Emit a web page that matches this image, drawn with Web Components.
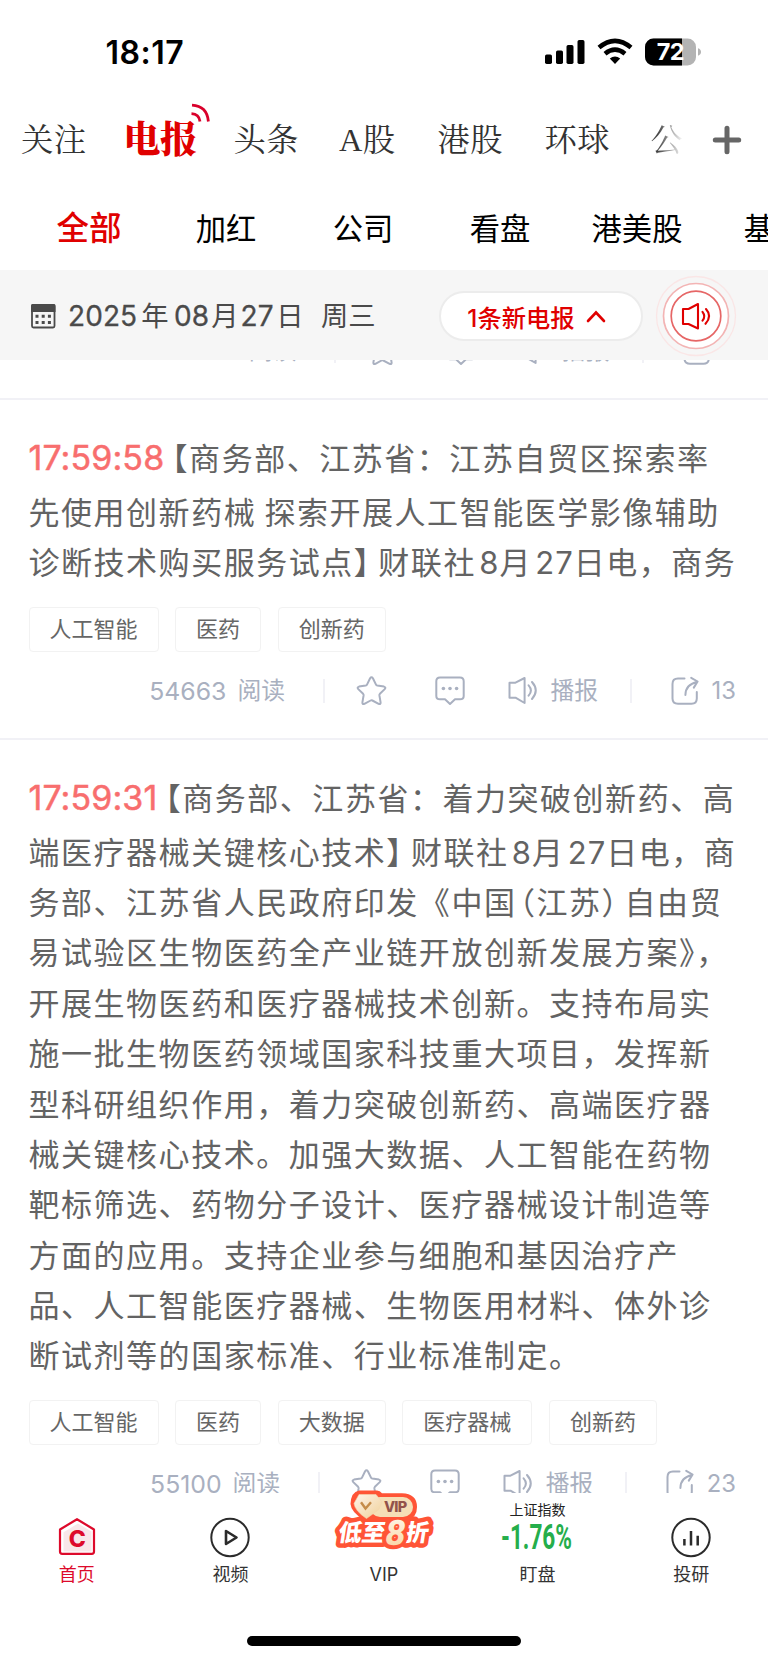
<!DOCTYPE html>
<html lang="zh-CN">
<head>
<meta charset="utf-8">
<meta name="viewport" content="width=device-width, initial-scale=1">
<title>电报</title>
<style>
  html, body { margin: 0; padding: 0; background: #fff; }
  body { font-family: Inter, "Noto Sans CJK SC", sans-serif; width: 768px; height: 1663px; overflow: hidden; }
</style>
</head>
<body>
<telegraph-app></telegraph-app>

<script>
const ICONS = {
  star: `<svg width="31" height="30" viewBox="0 0 31 30"><path d="M14.1 2.2Q15.5.2 16.9 2.2L20 8.6Q20.4 9.4 21.3 9.6L28 10.6Q30.3 11.2 28.7 13.1L23.9 17.8Q23.3 18.5 23.4 19.4L24.6 26.4Q24.8 28.6 22.6 27.8L16.4 24.5Q15.5 24 14.6 24.5L8.4 27.8Q6.2 28.6 6.4 26.4L7.6 19.4Q7.7 18.5 7.1 17.8L2.3 13.1Q.7 11.2 3 10.6L9.7 9.6Q10.6 9.4 11 8.6Z"/></svg>`,
  comment: `<svg width="30" height="30" viewBox="0 0 30 30"><path d="M5 1.5H25Q28.7 1.5 28.7 5.2V20Q28.7 23.3 25 23.3H20L15 28L10 23.3H5Q1.3 23.3 1.3 20V5.2Q1.3 1.5 5 1.5Z"/><g fill="currentColor" stroke="none"><circle cx="8.4" cy="12.5" r="1.8"/><circle cx="15" cy="12.5" r="1.8"/><circle cx="21.6" cy="12.5" r="1.8"/></g></svg>`,
  speaker: `<svg width="30" height="30" viewBox="0 0 30 30"><path d="M1.5 6.7H7.5L16.6 2V27L7.5 21.7H1.5Z"/><path d="M20.6 9.3Q25.2 14.4 20.6 19.7M24 6Q31.5 14.4 24 23"/></svg>`,
  share: `<svg width="28" height="30" viewBox="0 0 28 30"><path d="M13.5 2.6H7Q1.5 2.6 1.5 8V22.5Q1.5 27.7 7 27.7H20.5Q25.8 27.7 25.8 22.5V16"/><path d="M14.4 19Q14.5 8.5 26 6M20.2 1.8L26.6 5.5L22.8 11.6"/></svg>`
};

class StatusBar extends HTMLElement {
  constructor() {
    super();
    this.attachShadow({ mode: 'open' }).innerHTML = `
      <style>
        :host { display: flex; align-items: center; height: 104px; padding: 0 66px 0 105.5px; box-sizing: border-box; }
        .clock { font-size: 32px; font-weight: 600; letter-spacing: .5px; flex: 1; }
        svg { display: block; }
      </style>
      <div class="clock">18:17</div>
      <svg width="157" height="30" viewBox="0 0 157 30">
        <rect x="0" y="17.5" width="7" height="9.5" rx="1.7"/>
        <rect x="11" y="13.5" width="7" height="13.5" rx="1.7"/>
        <rect x="21.5" y="8" width="7" height="19" rx="1.7"/>
        <rect x="32.5" y="3" width="7" height="24" rx="1.7"/>
        <g fill="none" stroke="#000" stroke-width="4.6">
          <path d="M54 10.5Q70 -2.8 86 10.5"/>
          <path d="M60 16.7Q70 8.6 80 16.7"/>
        </g>
        <path d="M64.8 21.5Q70 17.6 75.2 21.5L70 27Z"/>
        <clipPath id="b"><rect x="100" y="1.5" width="51" height="27" rx="8.5"/></clipPath>
        <g clip-path="url(#b)"><rect x="100" width="51" height="30" fill="#b3b3b3"/><rect x="100" width="37" height="30"/></g>
        <path d="M153 11.3Q156 12.3 156 15T153 18.7Z" fill="#b3b3b3"/>
        <text x="125.3" y="23.2" font-size="23.5" font-weight="700" fill="#fff" text-anchor="middle" letter-spacing="-.6">72</text>
      </svg>`;
  }
}

class ChannelTabs extends HTMLElement {
  constructor() {
    super();
    const tabs = [['关注', 101.5], ['电报', 111], ['头条', 105.5], ['A股', 98.5], ['港股', 107], ['环球', 106], ['公', 43.5]];
    this.attachShadow({ mode: 'open' }).innerHTML = `
      <style>
        :host { display: flex; align-items: center; height: 72px; padding-left: 21px; color: #333;
          font-family: "Liberation Serif", "Noto Serif CJK SC", "Noto Sans CJK SC", serif; font-size: 32.3px; letter-spacing: .5px; }
        .tab { flex: none; white-space: nowrap; line-height: 73px; position: relative; }
        .on { color: #e00000; font-size: 37px; font-weight: 900; letter-spacing: -.5px; left: 1px; }
        .on svg { position: absolute; left: 66px; top: -1px; }
        .tab:last-of-type { background: linear-gradient(90deg, #444 20%, #fff 95%); -webkit-background-clip: text; color: transparent; background-size: 34px 100%; background-repeat: no-repeat; }
        .plus { margin-left: 18px; }
      </style>
      ${tabs.map(([t, w], i) => `<div class="tab ${i === 1 ? 'on' : ''}" style="width:${w}px">${t}${i === 1 ? `
        <svg width="22" height="22" viewBox="0 0 22 22" fill="none" stroke="#d9002b" stroke-width="2.8"><path d="M2 2.2Q17 3 18.4 18.5M1.5 10.7Q9 11 10 18.5"/></svg>` : ''}</div>`).join('')}
      <svg class="plus" width="30" height="30" viewBox="0 0 30 30" stroke="#666" stroke-width="5" stroke-linecap="round"><path d="M15 3.3V26.7M3.3 15H26.7"/></svg>`;
  }
}

class FilterTabs extends HTMLElement {
  constructor() {
    super();
    this.attachShadow({ mode: 'open' }).innerHTML = `
      <style>
        :host { display: flex; height: 94px; padding-left: 20.5px; overflow: hidden; font-size: 30.3px; color: #000; }
        span { flex: 0 0 137px; text-align: center; line-height: 106px; white-space: nowrap; }
        span:first-of-type { color: #e00000; font-size: 32.5px; font-weight: 500; }
      </style>
      ${['全部', '加红', '公司', '看盘', '港美股', '基金'].map(t => `<span>${t}</span>`).join('')}`;
  }
}

class DateBar extends HTMLElement {
  constructor() {
    super();
    this.attachShadow({ mode: 'open' }).innerHTML = `
      <style>
        :host { display: flex; align-items: center; height: 90px; background: #f6f6f6; color: #4a4a4a; position: relative; z-index: 1; padding-left: 30px; box-sizing: border-box; }
        .date { display: flex; align-items: baseline; font-size: 27.3px; line-height: 40px; width: 371px; margin-left: 12px; margin-top: 2px; white-space: nowrap; }
        .date b { font-weight: 400; font-size: 28px; letter-spacing: .1px; -webkit-text-stroke: .3px; }
        .date i { font-style: normal; font-weight: 400; }
        .pill { display: flex; align-items: center; justify-content: center; gap: 11px; width: 204px; height: 50px; box-sizing: border-box; margin: 2px 0 0 0; padding-right: 9px;
          border: 2px solid #ececec; border-radius: 25px; background: #fff; color: #e00000; font-size: 24.3px; font-weight: 500; white-space: nowrap; }
        .live { margin: 1px 0 0 11px; }
        svg { flex: none; }
      </style>
      <svg width="26" height="26" viewBox="0 0 26 26" style="margin-top:2px"><rect x="2" y="2" width="22.5" height="22.5" rx="1.5" fill="none" stroke="#4a4a4a" stroke-width="1.8"/><path d="M1 2.5Q1 1 2.5 1H24Q25.5 1 25.5 2.5V9H1Z" fill="#4a4a4a"/>
        <g fill="#4a4a4a"><path d="M5.5 11.8h3v3h-3zM11.7 11.8h3v3h-3zM17.9 11.8h3v3h-3zM5.5 18h3v3h-3zM11.7 18h3v3h-3zM17.9 18h3v3h-3z"/></g></svg>
      <div class="date"><b>2025</b><i style="margin:0 5.5px 0 4px">年</i><b>08</b><i style="margin:0 2px">月</i><b>27</b><i style="margin-left:2.5px">日</i><i style="margin-left:17.5px">周三</i></div>
      <div class="pill"><span>1条新电报</span><svg width="20" height="13" viewBox="0 0 20 13" fill="none" stroke="#e00000" stroke-width="2.6" stroke-linecap="round"><path d="M2 11L10 2.5L18 11"/></svg></div>
      <svg class="live" width="84" height="84" viewBox="0 0 84 84" fill="none">
        <circle cx="42" cy="42" r="39.5" stroke="#fae6e6" stroke-width="1.3"/>
        <circle cx="42" cy="42" r="32.5" fill="#fff" stroke="#f3b4b4" stroke-width="1.7"/>
        <circle cx="42" cy="42" r="24.8" fill="#fff" stroke="#e66666" stroke-width="1.7"/>
        <g stroke="#e00000" stroke-width="2.1" stroke-linecap="round" stroke-linejoin="round"><path d="M29 35H34.5L44 30V54.5L34.5 50H29Z"/><path d="M48.5 37.8Q52 42.2 48.5 46.7M52 35Q58.5 42.2 51.5 49.8" /></g>
      </svg>`;
  }
}

class NewsItem extends HTMLElement {
  constructor() {
    super();
    this.attachShadow({ mode: 'open' });
  }

  connectedCallback() {
    const time = this.getAttribute('time');
    const tags = (this.getAttribute('tags') || '').split(' ').filter(Boolean);
    const lines = this.textContent.trim().split('\n').map(s => s.trim()).filter(Boolean);
    const reads = this.getAttribute('reads') || '';
    const shares = this.getAttribute('shares') || '';
    this.shadowRoot.innerHTML = `
      <style>
        :host { display: block; padding: 29px 28.5px 32px; border-bottom: 2px solid #f1f1f6; }
        :host([tail]) { padding-top: 0; margin-top: -24px; }
        .line { height: 50.4px; line-height: 50.4px; font-size: 31px; letter-spacing: 1.53px; color: #636363; white-space: nowrap; word-spacing: -2px; }
        .line:first-of-type { height: 59px; line-height: 57px; }
        .time { color: #f86e6e; font-size: 34px; letter-spacing: .1px; -webkit-text-stroke: .5px; margin-right: 7.8px; }
        .half { font-feature-settings: "halt"; }
        .l { margin-left: 3px; } .r { margin-right: 6px; } .e { margin-right: 7.5px; }
        .num { margin-left: 3.3px; letter-spacing: 1px; }
        .tags { display: flex; gap: 16.6px; margin-top: 17.8px; }
        .tags span { box-sizing: border-box; height: 45px; line-height: 42px; padding: 0 20px; border: 1px solid #f2f2f2; border-radius: 4px; font-size: 22px; color: #666; white-space: nowrap; }
        .meta { display: flex; align-items: center; justify-content: flex-end; height: 30px; margin: 24px 3.5px 0 0; color: #a9b0c0; font-size: 23.8px; line-height: 30px; white-space: nowrap; }
        :host([tail]) .meta { margin-top: 0; }
        :host([tail]) .meta span { line-height: 28px; }
        .meta b { font-weight: 400; font-size: 24.8px; margin-right: 11px; }
        .meta hr { width: 2px; height: 24px; margin: 0; border: 0; background: #f1f1f6; }
        .meta svg { fill: none; stroke: currentColor; stroke-width: 2; stroke-linejoin: round; stroke-linecap: round; flex: none; }
        .meta .cnt { margin-left: 12.5px; min-width: 13px; }
      </style>
      ${lines.map((l, i) => `<div class="line">${i === 0 && time ? `<span class="time">${time}</span>` : ''}${this._mark(l)}</div>`).join('')}
      ${tags.length ? `<div class="tags">${tags.map(t => `<span>${t}</span>`).join('')}</div>` : ''}
      <div class="meta">
        <b>${reads}</b><span>阅读</span>
        <hr style="margin:0 31px 0 38px">${ICONS.star}
        <span style="width:48px"></span>${ICONS.comment}
        <span style="width:43px"></span>${ICONS.speaker}
        <span style="margin-left:12.5px">播报</span>
        <hr style="margin:0 39px 0 32px">${ICONS.share}
        <span class="cnt">${shares}</span>
      </div>`;
  }

  // brackets are set half-width, digits get a little air before them
  _mark(s) {
    return s.replace(/\d+/g, '<span class="num">$&</span>')
      .replace(/【/g, '<span class="half">【</span>')
      .replace(/】/g, '<span class="half e">】</span>')
      .replace(/（/g, '<span class="half l">（</span>')
      .replace(/）/g, '<span class="half r">）</span>');
  }
}

class NavItem extends HTMLElement {
  constructor() {
    super();
    this.attachShadow({ mode: 'open' }).innerHTML = `
      <style>
        :host { display: flex; flex-direction: column; align-items: center; flex: 1; color: #333; font-size: 18px; }
        .icon { height: 69px; display: flex; align-items: flex-end; justify-content: center; }
        .label { line-height: 26px; white-space: nowrap; }
      </style>
      <div class="icon"><slot name="icon"></slot></div>
      <div class="label"><slot></slot></div>`;
  }
}

class TabBar extends HTMLElement {
  constructor() {
    super();
    this.attachShadow({ mode: 'open' }).innerHTML = `
      <style>
        :host { display: block; height: 170px; background: #fff; position: relative; z-index: 2; }
        nav { display: flex; height: 143px; }
        svg { display: block; overflow: visible; }
        .home { width: 274px; height: 10px; border-radius: 5px; background: #000; margin: 0 auto; }
        .on { color: #dd0a2b; }
      </style>
      <nav>
        <nav-item class="on">
          <svg slot="icon" width="40" height="45" viewBox="0 0 40 45"><path d="M20 2.2L37 12.5V34.5Q37 36.8 34.8 36.8H5.2Q3 36.8 3 34.5V12.5Z" fill="#fff" stroke="#dd0a2b" stroke-width="2.2" stroke-linejoin="round"/><path d="M21 6.5L34.5 14.5V34.5H6.5V15.2Z" fill="#f8e7e9"/>
            <text x="20.2" y="30.1" text-anchor="middle" font-size="23" font-weight="800" fill="#dd0a2b">C</text></svg>
          首页</nav-item>
        <nav-item>
          <svg slot="icon" width="40" height="44" viewBox="0 0 40 44" fill="none" stroke="#2b2b2b" stroke-linejoin="round"><circle cx="20" cy="19.5" r="18.7" stroke-width="2"/><path d="M16 13V26L26.5 19.5Z" stroke-width="2.6"/></svg>
          视频</nav-item>
        <nav-item>
          <svg slot="icon" width="100" height="73" viewBox="0 0 100 73">
            <defs>
              <linearGradient id="gold" x1="0" y1="0" x2="1" y2="1"><stop offset="0" stop-color="#fff3ea"/><stop offset="1" stop-color="#efd198"/></linearGradient>
              <linearGradient id="eight" x1="0" y1="0" x2="0" y2="1"><stop offset="0" stop-color="#fffaf0"/><stop offset="1" stop-color="#f8cf99"/></linearGradient>
              <style>
                .cut { font: 900 23.5px "Noto Sans CJK SC", sans-serif; fill: #fff; stroke: #ff5436; stroke-width: 9px; stroke-linejoin: round; paint-order: stroke; }
                .eight { font: 800 35px Roboto, sans-serif; fill: url(#eight); stroke: #ff5436; stroke-width: 8px; stroke-linejoin: round; paint-order: stroke; }
              </style>
            </defs>
            <path d="M25 1.5H43Q46 1.5 48 4.3H68Q83 4.8 83 18Q83 29 73 31H30Q17 23 16.5 15Q17 3 25 1.5Z" fill="#ff5436"/>
            <g transform="skewX(-9)">
              <text class="cut" x="11.5" y="52.5">低至</text>
              <text class="cut" x="78.5" y="52.5">折</text>
              <text class="eight" x="58.5" y="56">8</text>
            </g>
            <rect x="36" y="8" width="43" height="20" rx="10" fill="#f5dfb6"/>
            <path d="M25 5.5H42L48 13L45 20.5L32.5 29.5Q21 22 20 14.5Z" fill="url(#gold)" stroke="#f4d7af" stroke-width=".6"/>
            <path d="M27 13.2L31.5 19.5L37 13.2" fill="none" stroke="#c58c4a" stroke-width="2.4"/>
            <text x="50" y="23" font-family="Inter" font-size="14.5" font-weight="800" letter-spacing="-.8" fill="#93534a">VIP</text>
          </svg>
          VIP</nav-item>
        <nav-item>
          <svg slot="icon" width="74" height="60" viewBox="0 0 74 60">
            <text x="8.5" y="12.8" font-family="'Noto Sans CJK SC', sans-serif" font-size="14" fill="#222">上证指数</text>
            <text x="0" y="46.5" font-family="Roboto" font-size="35" font-weight="700" fill="#25ae4b" textLength="71" lengthAdjust="spacingAndGlyphs">-1.76%</text>
          </svg>
          盯盘</nav-item>
        <nav-item>
          <svg slot="icon" width="40" height="44" viewBox="0 0 40 44" fill="none" stroke="#2b2b2b"><circle cx="20" cy="19.5" r="18.7" stroke-width="2"/><path d="M13.4 21V27.5M20 13V27.5M26.7 17.8V27.5" stroke-width="2.5"/></svg>
          投研</nav-item>
      </nav>
      <div class="home"></div>`;
  }
}

class TelegraphApp extends HTMLElement {
  constructor() {
    super();
    this.attachShadow({ mode: 'open' }).innerHTML = `
      <style>
        :host { display: flex; flex-direction: column; width: 768px; height: 1663px; overflow: hidden; background: #fff; }
        .feed { flex: 1; min-height: 0; overflow: hidden; display: flow-root; }
      </style>
      <status-bar></status-bar>
      <channel-tabs></channel-tabs>
      <filter-tabs></filter-tabs>
      <date-bar></date-bar>
      <div class="feed">
        <news-item tail></news-item>
        <news-item time="17:59:58" tags="人工智能 医药 创新药" reads="54663" shares="13">
          【商务部、江苏省：江苏自贸区探索率
          先使用创新药械 探索开展人工智能医学影像辅助
          诊断技术购买服务试点】财联社8月27日电，商务
        </news-item>
        <news-item time="17:59:31" tags="人工智能 医药 大数据 医疗器械 创新药" reads="55100" shares="23">
          【商务部、江苏省：着力突破创新药、高
          端医疗器械关键核心技术】财联社8月27日电，商
          务部、江苏省人民政府印发《中国（江苏）自由贸
          易试验区生物医药全产业链开放创新发展方案》，
          开展生物医药和医疗器械技术创新。支持布局实
          施一批生物医药领域国家科技重大项目，发挥新
          型科研组织作用，着力突破创新药、高端医疗器
          械关键核心技术。加强大数据、人工智能在药物
          靶标筛选、药物分子设计、医疗器械设计制造等
          方面的应用。支持企业参与细胞和基因治疗产
          品、人工智能医疗器械、生物医用材料、体外诊
          断试剂等的国家标准、行业标准制定。
        </news-item>
      </div>
      <tab-bar></tab-bar>`;
  }
}

customElements.define('status-bar', StatusBar);
customElements.define('channel-tabs', ChannelTabs);
customElements.define('filter-tabs', FilterTabs);
customElements.define('date-bar', DateBar);
customElements.define('news-item', NewsItem);
customElements.define('nav-item', NavItem);
customElements.define('tab-bar', TabBar);
customElements.define('telegraph-app', TelegraphApp);
</script>
</body>
</html>
